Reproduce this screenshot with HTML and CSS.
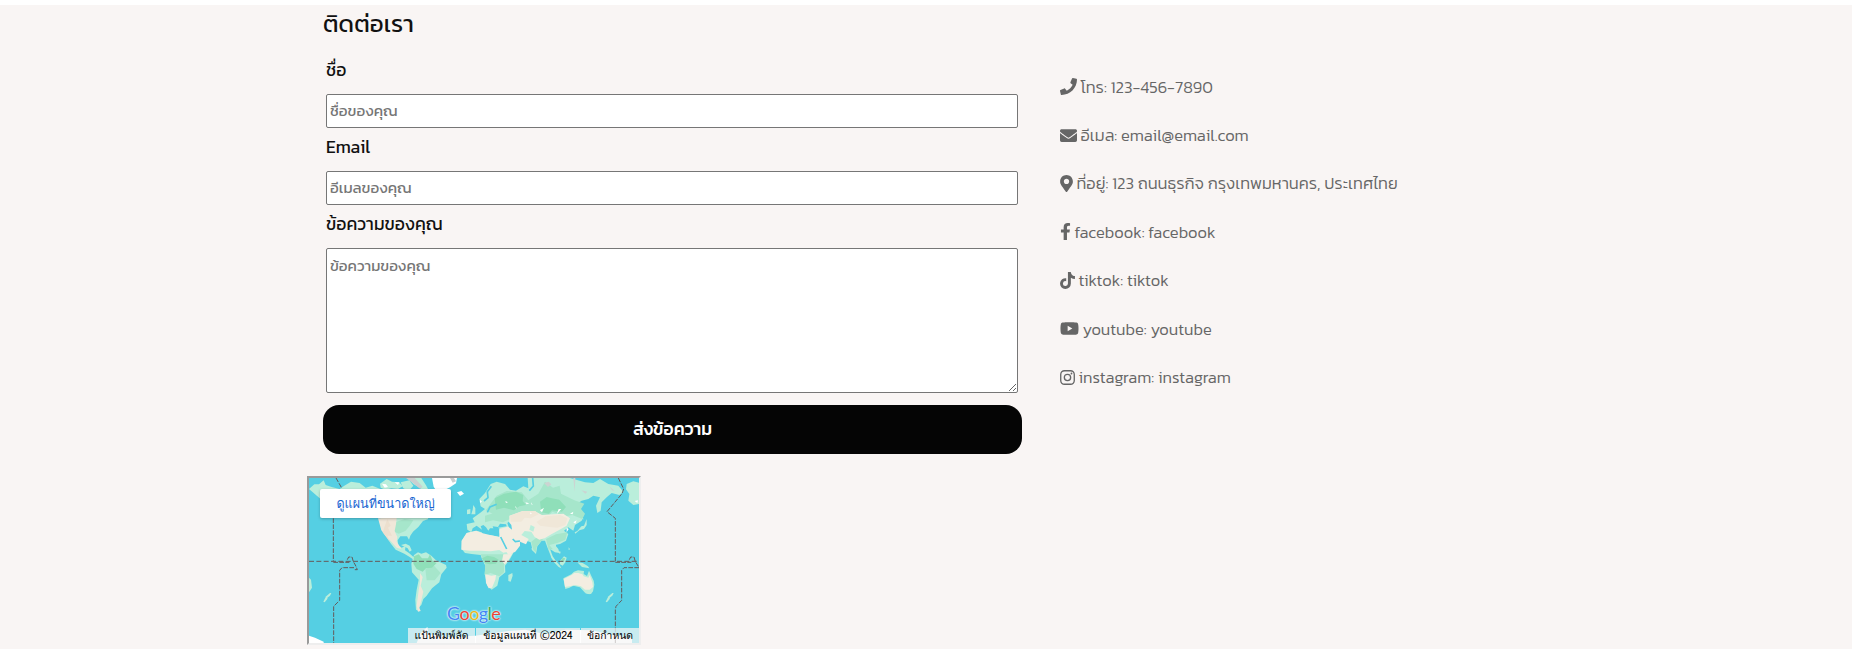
FILE: index.html
```html
<!DOCTYPE html>
<html lang="th">
<head>
<meta charset="utf-8">
<title>ติดต่อเรา</title>
<link rel="stylesheet" href="styles.css">
</head>
<body>
<section class="contact">
  <div class="columns">
    <form class="form">
      <h2 class="title">ติดต่อเรา</h2>
      <label class="label">ชื่อ</label>
      <input class="field" type="text" placeholder="ชื่อของคุณ">
      <label class="label">Email</label>
      <input class="field" type="text" placeholder="อีเมลของคุณ">
      <label class="label">ข้อความของคุณ</label>
      <textarea class="field area" placeholder="ข้อความของคุณ"></textarea>
      <button class="send" type="button">ส่งข้อความ</button>
    </form>
    <ul class="info">
      <li><svg width="17" height="17" viewBox="0 0 512 512"><path d="M493.4 24.6l-104-24c-11.300-2.600-22.900 3.300-27.500 13.900l-48 112c-4.200 9.800-1.400 21.300 6.900 28l60.600 49.600c-36 76.700-98.900 140.500-177.200 177.200l-49.600-60.600c-6.800-8.300-18.200-11.100-28-6.900l-112 48C3.900 366.500-2 378.100.6 389.400l24 104C27.100 504.200 36.700 512 48 512c256.100 0 464-207.500 464-464 0-11.200-7.700-20.900-18.600-23.400z"/></svg><span>โทร: 123-456-7890</span></li>
      <li><svg width="17" height="17" viewBox="0 0 512 512"><path d="M502.300 190.800c3.900-3.100 9.700-.2 9.700 4.700V400c0 26.500-21.500 48-48 48H48c-26.500 0-48-21.500-48-48V195.600c0-5 5.700-7.800 9.700-4.700 22.400 17.400 52.100 39.500 154.100 113.600 21.100 15.400 56.700 47.800 92.200 47.600 35.700.3 72-32.800 92.300-47.600 102-74.100 131.600-96.300 154-113.700zM256 320c23.200.4 56.600-29.200 73.400-41.400 132.700-96.300 142.800-104.700 173.400-128.700 5.800-4.500 9.200-11.500 9.200-18.900v-19c0-26.500-21.500-48-48-48H48c-26.500 0-48 21.500-48 48v19c0 7.400 3.400 14.300 9.200 18.900 30.600 23.900 40.700 32.400 173.400 128.700 16.800 12.200 50.200 41.800 73.400 41.400z"/></svg><span>อีเมล: email@email.com</span></li>
      <li><svg width="13" height="17" viewBox="0 0 384 512"><path d="M172.300 501.700C27 291 0 269.400 0 192 0 86 86 0 192 0s192 86 192 192c0 77.400-27 99-172.300 309.700-9.500 13.800-29.900 13.800-39.400 0zM192 272c44.200 0 80-35.800 80-80s-35.800-80-80-80-80 35.800-80 80 35.800 80 80 80z"/></svg><span>ที่อยู่: 123 ถนนธุรกิจ กรุงเทพมหานคร, ประเทศไทย</span></li>
      <li><svg width="11" height="17" viewBox="0 0 320 512"><path d="M279.100 288l14.200-92.700h-88.900v-60.100c0-25.300 12.400-50.100 52.200-50.100h40.400V6.300S260.400 0 225.400 0c-73.200 0-121.100 44.400-121.100 124.700v70.600H22.900V288h81.400v224h100.200V288z"/></svg><span>facebook: facebook</span></li>
      <li><svg width="15" height="17" viewBox="0 0 448 512"><path d="M448 209.900a210.100 210.100 0 0 1-122.800-39.300v178.800A162.600 162.600 0 1 1 185 188.300v89.900a74.600 74.600 0 1 0 52.200 71.200V0h88a121.200 121.200 0 0 0 1.900 22.200 122.200 122.200 0 0 0 53.900 80.200 121.400 121.400 0 0 0 67 20.100z"/></svg><span>tiktok: tiktok</span></li>
      <li><svg width="19" height="17" viewBox="0 0 576 512"><path d="M549.700 124.100c-6.300-23.700-24.800-42.300-48.300-48.600C458.800 64 288 64 288 64S117.200 64 74.600 75.500c-23.500 6.300-42 24.900-48.300 48.600-11.400 42.900-11.400 132.300-11.400 132.300s0 89.400 11.400 132.300c6.300 23.700 24.800 41.500 48.300 47.800C117.200 448 288 448 288 448s170.800 0 213.400-11.500c23.500-6.300 42-24.200 48.300-47.800 11.400-42.900 11.400-132.300 11.400-132.300s0-89.400-11.400-132.300zM232.200 337.600V175.200l142.700 81.200-142.700 81.200z"/></svg><span>youtube: youtube</span></li>
      <li><svg width="15" height="17" viewBox="0 0 448 512"><path fill-rule="evenodd" d="M132 32H316A132 132 0 0 1 448 164V348A132 132 0 0 1 316 480H132A132 132 0 0 1 0 348V164A132 132 0 0 1 132 32zM134 72A94 94 0 0 0 40 166V346A94 94 0 0 0 134 440H314A94 94 0 0 0 408 346V166A94 94 0 0 0 314 72zM224 141a115 115 0 1 1 0 230a115 115 0 1 1 0-230zM224 181a75 75 0 1 0 0 150a75 75 0 1 0 0-150zM344 109a27 27 0 1 1 0 54a27 27 0 1 1 0-54z"/></svg><span>instagram: instagram</span></li>
    </ul>
  </div>
  <div class="map">
    <svg class="world" viewBox="27 27 990 495" preserveAspectRatio="none">
      <rect x="27" y="27" width="990" height="495" fill="#55cfe3"/>
      <!-- Americas, Pacific islands -->
      <g fill="#baeedb">
        <path d="M27 60l16-14 14 0 14-12 6 14 18 6 24 6 14-10 20-12 26 4 18 14 20-6 30 12 40-2 30 4 40 20 24 14 18 20-6 18-12 6 4 8-16 6-14 18-16 14-8 12-4 12-6-10-20 0-8 12 2 14 10 8 12-6-2 14 12 8 16 14-2 6-12-8-16-10-26-12-16-20-12-22-14-18-2-32-14-16-26-20-40-14-28-4-22 14-20 16-8 12 2-24-14-14z"/>
        <path d="M240 44l20-14 16 8 22 2 10 12-14 8-20-2-18 4-14-6zM302 40l26-6 12 16-14 16-16-8zM322 27h42l14 22 12 22-10 6-20-20-20-12z"/>
        <path d="M342 258l12-8 10 4 14-4 16 10 14 14 30 14 2 8-16 20-6 24-22 18-16 22-10 10-6 18-6 6-2 12-8-4-2-30 4-30 6-30-20-22-2-26zM303 228l14-4 12 6 6 14-6 4-6-10z"/>
        <path d="M27 326l6 6 3 24-9 14zM70 398l6-12 8-6-2 10-8 10zM76 384l14-12 4 0-4 8-10 8zM917 398l6-12 8-6-2 10-8 10zM923 384l14-12 4 0-4 8-10 8z"/>
      </g>
      <path d="M286 160l28-10 26 4-12 18-12 14-20 8-18-8zM376 300l26-10 20 22-18 22-24 0z" fill="#a6e6cb"/>
      <path d="M342 262l14-6 10 12 18 0 6-12 8 20 12 6-14 14-18 2-10 10-18-8-10-16z" fill="#8fdfb9"/>
      <path d="M234 148l56-2-2 20-4 20 8 18-2 14 14 22-14-4-16-18-16-16-14-18zM360 312l8 12-6 26 8 18-6 26-6 22 4 10-8 2-4-18 6-46 4-26z" fill="#f0e7d9"/>
      <path d="M262 150l10 20-8 6 12 24-14 0 8 20-22-30z" fill="#ecdfce"/>
      <!-- Eurasia, Africa, Oceania -->
      <g transform="translate(480 0)">
        <g fill="#baeedb">
          <path d="M22 182l-2-17 24-5-6-12 22-16 15-12-13-8-4-22 17-18 17-27 18-7 25 7 15 17 18 3 22-13 15 6-2-31h127l45 13 25 2 20-12 25 15 30 5 15 18-12 10-23-6-15 13-15 15-3 25-10 7-4-22 12-25-20-5-15 10-20 5-15 10 10 20 12 10-7 20-20 13-5 17-15-10-13 10 13 10-7 20-18 10-15 3 10 12 3 12-13-2-15-10 8 22 12 18-15-12-13-33-7-20-10 0-13 17-4 23-10-10-6-25-34-12 2 14-15 18-20 8-20-38-7-20 0-12-28 0-5 7-7-10-8-7-8 4 4 10-16-12-12 8-4 12z"/>
          <path d="M5 240v-25l15-23 30-7 15 5 5 8 20 0 30 7 10 30 10 15 20 2-10 18-15 20 1 20-18 15-6 25-17 12-13-12-8-35 2-25-11-22-3-10-27-3-20-3z"/>
          <path d="M500 45l20-8 17 4v64l-17 3-15-13 3-20-10-14zM40 108l6 10 0 18-12 0 4-14zM21 122l10-2 0 14-10 2zM145 318l12-6 1 8-6 18-7-2zM214 238l6 0 2 8-6-2zM272 262l14 12 14 16 4 8-8-4-14-14zM300 276l12-14 8 4-4 14-8 10-8-4zM352 280l16 2 16 10 4 6-22-4zM344 190l8-4 12-14 8-2 8-20 0 18-8 12-14 4-12 10zM280 222l8 2 0 14-4-4zM294 246l8 2-2 8zM326 235l4 6-4 2zM360 146l8-8 2 14z"/>
          <path d="M310 328l24-12 8-8 12-4 18 2-1 9 10 6 6-16 6 14 8 16 2 12-4 20-6 8-8 0-10-4-15-16-20-5-12 6-12 4z"/>
          <path d="M374 372l14 0 12-8-12 12z"/>
        </g>
        <g fill="#a6e6cb">
          <path d="M75 140l40-12 30 2 4 20-20 10-30-6-24 6zM110 80l30-14 45 4 20 24 30-20 20-36 24 18 20-6 4 24 40 20 30 10-10 16 12 14-8 16-30-12-20 4-40-14-20 22-40-4-40 0-40 8-60-30zM214 218l18-14 20 2-10 12-12 16-2 16-8-8zM258 210l30-14 34-6-6 22-24 10-24 6 10 12-12 2zM62 256l70 0 10 14-10 18 0 22-14 12-26-10-18 6 2-32z"/>
        </g>
        <path d="M104 88l28-14 36-6 22 10-2 18 10 12-20 4-16 12-30-8-24 6zM240 98l20-14 16 4 22 4 20 22-12 14-30-4-10 10-22-4zM66 268l16-8 20 4 14 8-8 12-20 2-14-4zM308 266l8 2-6 12-8-4z" fill="#8fdfb9"/>
        <g fill="#f3ede1">
          <path d="M4 242l1-27 15-23 28-7 20 8 22 5 30 6 10 30 10 15-10 2-12-8-26 4-30-2-34 0zM118 180l30-8 0-32 40-14 36 0 22 12 34-2 30-2 20 14-10 22-24 14-22 12-20 12-16 4-14-8-10-16-20-2-10 12 22 12-8 16-18-8 0 12-14 18-20 10-18-22-10-24z"/>
          <path d="M76 316l18 4 14-2-2 14-10 24-10 2-8-16zM130 256l20 0 8-4-14 24-10 10-8-10zM311 330l24-12 8-6 12 0 12 4 4 6 14 4 4-8 8 22 2 14-10 8-14 0-12-10-18-4-16 4-14 2z"/>
        </g>
        <path d="M150 140l38-14 38 0 10 10-24 12-18-2-10 12-32 0zM230 158l26-16 44-4 22 10-6 20-24 8-22-2-30-4z" fill="#f0e7d8"/>
        <path d="M212 168l12 6-4 14-12-6z" fill="#baeedb"/>
        <path d="M102 184l16-2-4-6 26-4-2-6-18-2-6 10-16-2zM146 158l8 10 2 14-10-8-4-12z" fill="#55cfe3"/>
        <path d="M122 204l18 36M158 210l8 8 14-2M72 96l12-10-2-18 12-16M82 130l8-16 20-8M218 27l2 24-12 14" stroke="#55cfe3" stroke-width="5" fill="none"/>
        <path d="M252 42l14-4 8 8-10 8zM340 27l6 0-2 42zM364 64l18 4-6 6zM448 52l16 14-8-2z" fill="#ccd4d2"/>
        <path d="M60 92l6 6-6 4zM136 96l8 4-6 2zM166 110l5 9-4-2zM196 100l12 3-8 3zM214 100l4 8-4-2zM240 124l12-8-6 14zM296 120l8 0-14 16zM330 134l10-6-2 8zM320 176l6 4-6 10zM340 160l10-6-4 10zM210 130l6 4-5 2zM524 96l10-2-2 8z" fill="#fff"/>
      </g>
      <!-- Greenland and Antarctica -->
      <path d="M396 27h75l-3 16-18 12-16 8-8 18-13-10-12-18zM471 70l13-4 8 8-12 7zM246 44l12 2 6 8-10 2zM284 40l14 0-4 8zM27 500l18 6 26 12v4H27zM350 522l12-30 20-18 4 22 60 8 80-4 100-14 50-4 60 14 60-14 80 2 60 14 60 10v14z" fill="#fff"/>
      <path d="M318 27l26 0 24 26-8 6-20-16zM450 27l12 0 6 10-10 4z" fill="#c9cfd0"/>
      <g fill="none" stroke="#665a5a" stroke-width="3">
        <path d="M27 277H1017" stroke-dasharray="15 7"/>
        <path d="M108 27l16 28M100 148V277M100 280h48M142 272l4-8h10l4 14 6 10 6 14h-10M162 296h-36l-7 8v90l-18 18V522M955 27l16 33-5 14-45 54 25 20V277M946 280h48M988 272l4-8h10l4 14 9 14M1017 296h-45l-7 8v90l-17 18-2 10V522" stroke-dasharray="14 4"/>
      </g>
    </svg>
    <div class="larger">ดูแผนที่ขนาดใหญ่</div>
    <div class="google"><span class="b">G</span><span class="r">o</span><span class="y">o</span><span class="b">g</span><span class="g">l</span><span class="r">e</span></div>
    <div class="legal"><span class="k1">แป้นพิมพ์ลัด</span><span class="k2">ข้อมูลแผนที่ ©2024</span><span class="k3">ข้อกำหนด</span></div>
  </div>
</section>
</body>
</html>
```
FILE: styles.css
```css
* { box-sizing: border-box; }
body { margin: 0; background: #fff; font-family: Kanit, "Noto Sans", sans-serif; overflow: hidden; }
.contact { margin-top: 5px; height: 644px; background: #f9f5f4; padding-left: 307px; }
.columns { display: flex; height: 472px; padding-left: 16px; white-space: nowrap; }
.form { width: 699px; display: flex; flex-direction: column; }
.title { margin: 0; height: 43px; padding-top: 1px; font-size: 24px; line-height: 36px; font-weight: 400; letter-spacing: .1px; color: #111; }
.label { height: 43px; margin: 0 0 0 3px; padding-top: 6px; font-size: 17.600px; line-height: 26px; letter-spacing: .05px; color: #111; }
.title + .label { height: 46px; padding-top: 9px; }
.field { width: 692px; height: 34px; margin: 0 0 0 3px; border: 1px solid #767676; border-radius: 2px; background: #fff; padding: 0 3px 1px; font-family: inherit; font-size: 15.200px; outline: 0; }
.field::placeholder { color: #757575; }
.area { height: 145px; padding: 6px 3px; line-height: 22px; resize: vertical; }
.send { margin-top: 12px; height: 49px; padding: 0 0 1px; border: 0; border-radius: 16px; background: #050505; color: #fff; font-family: inherit; font-size: 17.600px; font-weight: 500; }
.info { list-style: none; margin: 0; padding: 58px 0 0 38px; font-size: 16.500px; color: #666; font-weight: 300; }
.info li { display: flex; align-items: center; height: 48.400px; gap: 3.500px; }
.info svg { fill: #666; flex: none; margin-top: -1px; }
.map { position: relative; width: 334px; height: 169px; margin-top: -1px; border: 2px inset #eee; overflow: hidden; white-space: nowrap; font-family: Tahoma, Loma, "Noto Sans Thai Looped", "Noto Serif Thai", Roboto, sans-serif; }
.world { display: block; width: 100%; height: 100%; }
.larger { position: absolute; left: 11px; top: 11px; width: 131px; height: 29px; border-radius: 2px; background: #fff; box-shadow: 0 1px 3px rgba(0,0,0,.25); color: #1a66d2; font-size: 12.600px; line-height: 31px; text-align: center; }
.google { position: absolute; left: 138px; top: 123px; font: 18px/24px Lato, sans-serif; letter-spacing: -.55px; text-shadow: 0 0 2px #fff, 0 0 2px #fff; }
.b { color: #4285f4; } .r { color: #ea4335; } .y { color: #e9b91b; } .g { color: #34a853; }
.legal { position: absolute; right: 0; bottom: 0; display: flex; gap: 1px; height: 15px; font-size: 10.400px; line-height: 15px; color: #000; }
.k1, .k2, .k3 { background: rgba(245,245,245,.72); text-align: center; }
.k1 { width: 67px; } .k2 { width: 104px; } .k3 { width: 58px; }
```
